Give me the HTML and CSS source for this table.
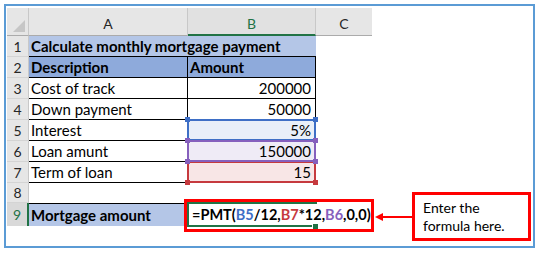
FILE: index.html
```html
<!DOCTYPE html>
<html>
<head>
<meta charset="utf-8">
<link rel="stylesheet" href="styles.css">
</head>
<body>
<div class="frame">
  <div class="sheet">
    <div class="corner"><span class="tri"></span></div>
    <div class="ch">A</div>
    <div class="ch sel">B</div>
    <div class="ch last">C</div>

    <div class="rh">1</div>
    <div class="c title span2 bb">Calculate monthly mortgage payment</div>
    <div class="c"></div>

    <div class="rh">2</div>
    <div class="c head bb br">Description</div>
    <div class="c head bb br">Amount</div>
    <div class="c"></div>

    <div class="rh">3</div>
    <div class="c bb br">Cost of track</div>
    <div class="c num bb br">200000</div>
    <div class="c"></div>

    <div class="rh">4</div>
    <div class="c bb br">Down payment</div>
    <div class="c num bb br">50000</div>
    <div class="c"></div>

    <div class="rh">5</div>
    <div class="c bb br">Interest</div>
    <div class="c num bb br fill-blue">5%<i class="hl blue"><b class="h tl"></b><b class="h tr"></b><b class="h bl"></b><b class="h brr"></b></i></div>
    <div class="c"></div>

    <div class="rh">6</div>
    <div class="c bb br">Loan amunt</div>
    <div class="c num bb br fill-purple">150000<i class="hl purple"><b class="h tl"></b><b class="h tr"></b><b class="h bl"></b><b class="h brr"></b></i></div>
    <div class="c"></div>

    <div class="rh">7</div>
    <div class="c bb br">Term of loan</div>
    <div class="c num bb br fill-red">15<i class="hl red"><b class="h tl"></b><b class="h tr"></b><b class="h bl"></b><b class="h brr"></b></i></div>
    <div class="c"></div>

    <div class="rh">8</div>
    <div class="c"></div>
    <div class="c"></div>
    <div class="c"></div>

    <div class="rh rsel">9</div>
    <div class="c total bt">Mortgage amount</div>
    <div class="c active"><span class="formula">=PMT(<span class="r-blue">B5</span>/12,<span class="r-red">B7</span>*12,<span class="r-purple">B6</span>,0,0)</span><i class="act"></i><b class="fh"></b></div>
    <div class="c"></div>
  </div>

  <div class="note-box"></div>
  <svg class="arrow" width="38" height="10" viewBox="0 0 38 10">
    <line x1="6" y1="5" x2="38" y2="5" stroke="#ff0000" stroke-width="2"/>
    <polygon points="0,5 8,1 8,9" fill="#ff0000"/>
  </svg>
  <div class="callout">Enter the<br>formula here.</div>
</div>
</body>
</html>
```

FILE: styles.css
```css
* { box-sizing: border-box; }
html, body { margin: 0; padding: 0; background: #fff; }
body { padding: 4px; }

.frame {
  position: relative;
  width: 531px;
  height: 244px;
  border: 2px solid #5b9bd5;
  padding: 2px 0 0 1px;
  font-family: Lato, "Liberation Sans", sans-serif;
  color: #000;
}

.sheet {
  display: grid;
  grid-template-columns: 22px 159px 128px 56px;
  grid-template-rows: 28px repeat(7, 21px) 20px 23px;
  font-size: 15px;
}

.corner {
  position: relative;
  background: #e6e6e6;
  border-right: 1px solid #c8c8c8;
  border-bottom: 1px solid #ababab;
}
.tri {
  position: absolute;
  right: 3px;
  bottom: 3px;
  width: 0;
  height: 0;
  border-left: 12px solid transparent;
  border-bottom: 12px solid #c6c6c6;
}

.ch {
  background: #e6e6e6;
  border-right: 1px solid #c8c8c8;
  border-bottom: 1px solid #ababab;
  display: flex;
  align-items: flex-end;
  justify-content: center;
  padding-bottom: 3px;
  color: #262626;
  font-size: 14px;
}
.ch.last { border-right: none; }
.ch.sel {
  background: #e1e1e1;
  color: #217346;
  border-bottom: 2px solid #217346;
  padding-bottom: 2px;
}

.rh {
  background: #e6e6e6;
  border-right: 1px solid #c8c8c8;
  border-bottom: 1px solid #d4d4d4;
  display: flex;
  align-items: center;
  justify-content: center;
  color: #262626;
  font-size: 14px;
}
.rh.rsel {
  background: #d9d9d9;
  color: #217346;
  border-right: 2px solid #217346;
  border-bottom: none;
}

.c {
  position: relative;
  display: flex;
  align-items: center;
  padding: 0 3px 0 2px;
  white-space: nowrap;
}
.span2 { grid-column: span 2; }
.bb { border-bottom: 1px solid #000; }
.br { border-right: 1px solid #000; }
.bt { border-top: 1px solid #000; }
.num { justify-content: flex-end; padding-right: 4px; }

.title { background: #b4c6e7; font-weight: 700; }
.head { background: #8eaadb; font-weight: 700; }
.total { background: #b4c6e7; font-weight: 700; }

.fill-blue { background: #e8eff9; }
.fill-purple { background: #efebf6; }
.fill-red { background: #f8e6e6; }

.hl {
  position: absolute;
  left: -1px;
  top: -1px;
  right: -1px;
  bottom: -1px;
  border: 2px solid;
  z-index: 1;
}
.hl.blue { border-color: #3e6fc6; color: #3e6fc6; }
.hl.red { border-color: #c63a3e; color: #c63a3e; z-index: 2; }
.hl.purple { border-color: #8660bd; color: #8660bd; z-index: 3; }
.h {
  position: absolute;
  width: 5px;
  height: 5px;
  background: currentColor;
}
.h.tl { left: -4px; top: -4px; }
.h.tr { right: -4px; top: -4px; }
.h.bl { left: -4px; bottom: -4px; }
.h.brr { right: -4px; bottom: -4px; }

.active {
  padding-left: 4px;
  font-weight: 700;
  font-size: 14.5px;
  overflow: visible;
  z-index: 4;
}
.formula {
  position: relative;
  z-index: 2;
  background: #fff;
}
.act {
  position: absolute;
  left: -1px;
  top: -1px;
  right: -1px;
  bottom: -1px;
  border: 2px solid #217346;
  border-right: none;
  z-index: 1;
}
.fh {
  position: absolute;
  right: -2px;
  bottom: -3px;
  width: 5px;
  height: 5px;
  background: #217346;
  box-shadow: 0 0 0 1px #fff;
  z-index: 3;
}
.r-blue { color: #3e6fc6; }
.r-red { color: #c63a3e; }
.r-purple { color: #8660bd; }

.note-box {
  position: absolute;
  left: 178px;
  top: 193px;
  width: 190px;
  height: 33px;
  border: 3px solid #ff0000;
  z-index: 5;
}
.arrow {
  position: absolute;
  left: 369px;
  top: 206px;
  z-index: 5;
}
.callout {
  position: absolute;
  left: 406px;
  top: 186px;
  width: 119px;
  height: 49px;
  border: 3px solid #ff0000;
  padding: 4px 0 0 8px;
  font-size: 14px;
  line-height: 18px;
  background: #fff;
}
```
